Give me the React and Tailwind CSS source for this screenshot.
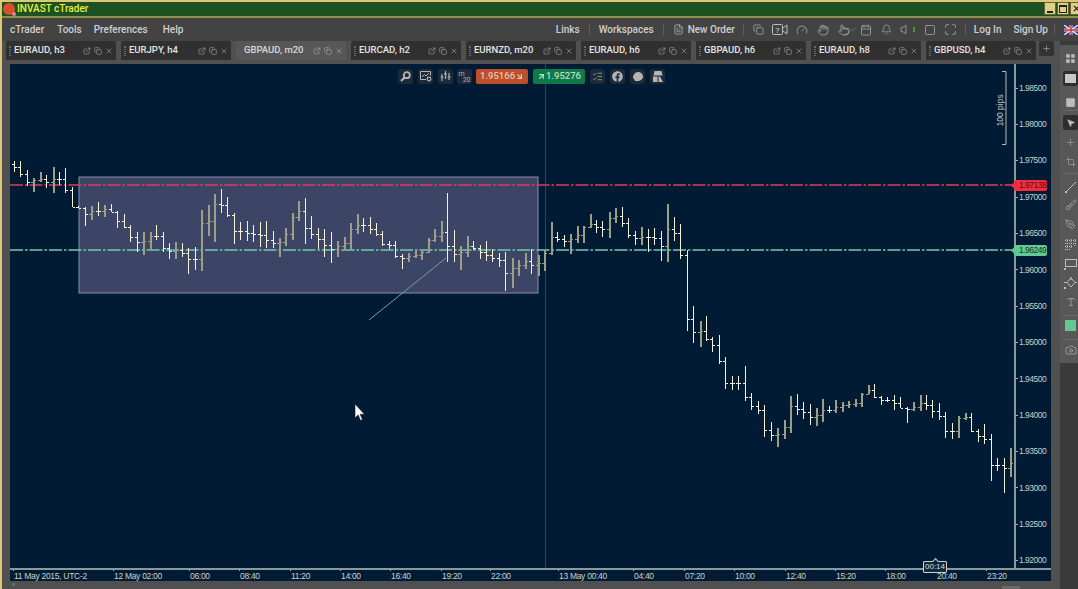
import React from 'react';
import {
  Bell, Calendar, Camera, Check, Copy, Crop, ExternalLink, Gauge, Hand, LayoutGrid, ListChecks,
  Maximize, MousePointer2, PanelTop, PenTool, Plus, Pointer, Square,
  Type, Volume, X, ArrowUpRight, ArrowDownRight, Brush, FileText,
} from 'lucide-react';
import { FaFacebook } from 'react-icons/fa';

const bars = [
  [161,172],[161,177],[170,186],[178,192],[172,182],[175,188],[167,193],[172,185],[168,193],[187,207],
  [206,208],[207,226],[206,220],[202,216],[205,217],[204,212],[211,228],[214,228],[225,242],[232,252],
  [232,255],[232,249],[225,240],[232,252],[243,259],[242,259],[243,257],[248,274],[247,270],[210,271],
  [205,236],[194,242],[189,213],[197,217],[213,244],[222,240],[221,241],[225,242],[222,247],[221,248],
  [231,248],[238,257],[228,246],[213,240],[201,221],[198,244],[216,239],[228,249],[229,257],[232,263],
  [241,257],[237,250],[223,249],[214,234],[218,232],[217,234],[223,236],[231,246],[241,249],[241,258],
  [254,269],[253,262],[250,258],[251,260],[238,253],[229,242],[221,242],[193,262],[230,262],[246,270],
  [236,257],[241,250],[245,259],[241,261],[249,262],[253,267],[252,291],[258,288],[260,276],[253,269],
  [249,274],[255,276],[250,271],[222,255],[232,242],[235,247],[234,254],[226,243],[226,243],[214,228],
  [220,233],[221,237],[212,238],[208,223],[207,227],[218,238],[231,245],[227,245],[229,252],[228,245],
  [231,261],[204,262],[217,241],[224,259],[250,331],[306,343],[321,347],[316,341],[337,352],[335,364],
  [357,389],[376,390],[376,390],[366,401],[393,410],[401,414],[405,437],[422,441],[428,447],[420,439],
  [396,433],[394,415],[402,419],[404,425],[408,426],[399,422],[406,413],[400,413],[402,412],[401,408],
  [399,407],[393,407],[385,394],[384,398],[396,405],[397,402],[395,410],[397,408],[407,423],[402,411],
  [395,411],[395,410],[400,418],[403,420],[412,438],[423,439],[416,438],[413,420],[413,432],[429,442],
  [424,444],[434,481],[458,471],[458,493],[448,477],
];

// close of a bar sits where it overlaps the next one, next bar opens there
const closes = bars.map(([h, l], i) => {
  const next = bars[i + 1] || [h, l];
  const top = Math.max(h, next[0]);
  const bottom = Math.min(l, next[1]);
  return Math.round(top <= bottom ? (top + bottom) / 2 : (h + l) / 2);
});

const prices = ['1.98500','1.98000','1.97500','1.97000','1.96500','1.96000','1.95500','1.95000','1.94500','1.94000','1.93500','1.93000','1.92500','1.92000'];

const times = [
  { w: 'w-[100px]', t: '11 May 2015, UTC-2' },
  { w: 'w-[76px]', t: '12 May 02:00' },
  { w: 'w-[50px]', t: '06:00' },
  { w: 'w-[51px]', t: '08:40' },
  { w: 'w-[50px]', t: '11:20' },
  { w: 'w-[50px]', t: '14:00' },
  { w: 'w-[51px]', t: '16:40' },
  { w: 'w-[49px]', t: '19:20' },
  { w: 'w-[68px]', t: '22:00' },
  { w: 'w-[75px]', t: '13 May 00:40' },
  { w: 'w-[51px]', t: '04:40' },
  { w: 'w-[50px]', t: '07:20' },
  { w: 'w-[51px]', t: '10:00' },
  { w: 'w-[50px]', t: '12:40' },
  { w: 'w-[50px]', t: '15:20' },
  { w: 'w-[51px]', t: '18:00' },
  { w: 'w-[50px]', t: '20:40' },
  { w: 'w-[28px]', t: '23:20' },
];

const tabs = ['EURAUD, h3','EURJPY, h4','GBPAUD, m20','EURCAD, h2','EURNZD, m20','EURAUD, h6','GBPAUD, h6','EURAUD, h8','GBPUSD, h4'];

function Tab({ label, active }) {
  return (
    <div className={`flex h-[19px] w-[110px] items-center rounded-t-[2px] pl-[3px] pr-[3px] ${active ? 'bg-[#575757] text-[#d8d8d8]' : 'bg-[#303030] text-[#e4e4e4]'}`}>
      <span className={`mr-[3px] h-[10px] w-[2px] border-x border-dotted ${active ? 'border-transparent' : 'border-[#666]'}`} />
      <span className="text-[9.5px] font-medium whitespace-nowrap">{label}</span>
      <span className="ml-auto flex items-center gap-[3px] text-[#c4c4c4]">
        <ExternalLink size={8} strokeWidth={1.4} />
        <Copy size={8} strokeWidth={1.4} />
        <X size={8} strokeWidth={1.4} />
      </span>
    </div>
  );
}

function Box({ children }) {
  return <div className="flex h-[15px] w-[15px] items-center justify-center rounded-[3px] bg-[#1c2a3a] text-[#b4b4b4]">{children}</div>;
}

function Chart() {
  return (
    <svg viewBox="10 64 1004 504" className="absolute inset-0 h-full w-full">
      <rect x="79" y="177" width="459" height="116" fill="#3c4565" stroke="#8b8bb5" strokeWidth="1" />
      <line x1="545.5" y1="64" x2="545.5" y2="568" stroke="#2f4353" strokeWidth="1" />
      <line x1="10" y1="185" x2="1014" y2="185" stroke="#dc3f52" strokeWidth="1.6" strokeDasharray="13 2 2.500 2" />
      <line x1="10" y1="250" x2="1014" y2="250" stroke="#72cbab" strokeWidth="1.6" strokeDasharray="13 2 2.500 2" />
      <line x1="369" y1="320" x2="446" y2="258" stroke="#6da59f" strokeWidth="1" />
      {bars.map(([h, l], i) => {
        const x = Math.round(13.7 + 6.47 * i) + 0.5;
        const open = i === 0 ? h + 3 : closes[i - 1];
        const close = closes[i];
        const down = close >= open;
        const c = down ? '#f5f3da' : '#9c9e86';
        return (
          <g key={i} stroke={c} strokeWidth="1" shapeRendering="crispEdges">
            <line x1={x} y1={h} x2={x} y2={l} strokeWidth={down ? 1 : 2} />
            <line x1={x - 2.500} y1={open + 0.5} x2={x} y2={open + 0.5} />
            <line x1={x} y1={close + 0.5} x2={x + 2.500} y2={close + 0.5} />
          </g>
        );
      })}
      <path d="M1002 71.500h4v73h-4" fill="none" stroke="#b4b8b8" strokeWidth="1" />
      <path d="M355 404v14l3.200-3 2.300 5.400 2-.9-2.300-5.200h4.300z" fill="#fff" stroke="#111" strokeWidth="0.6" />
    </svg>
  );
}

export default function App() {
  return (
    <div className="flex h-[589px] w-[1078px] flex-col overflow-hidden border-l-2 border-t-2 border-[#dcc878] bg-[#505050] font-['Roboto','Liberation_Sans',sans-serif]">
      <div className="flex h-[16px] items-start border-b-2 border-[#8d8f4a] bg-[#1e5122]">
        <div className="relative ml-[1px] mt-[1px] h-[12px] w-[12px] rounded-full bg-[#d8502e]">
          <span className="absolute -bottom-[1px] -right-[1px] h-[4px] w-[4px] rounded-full bg-[#f0808a]" />
        </div>
        <span className="ml-[2px] text-[10px] leading-[14px] font-medium text-[#e6f23e]">INVAST cTrader</span>
        <div className="ml-auto mr-[-4px] flex">
          <div className="mr-px flex h-[13px] w-[12px] items-end justify-center border border-[#6a6230] bg-[#dfcf86] pb-[1px]"><span className="h-[2px] w-[6px] bg-[#222]" /></div>
          <div className="mr-px flex h-[13px] w-[12px] items-center justify-center border border-[#6a6230] bg-[#dfcf86]"><span className="h-[8px] w-[8px] border border-t-2 border-[#222]" /></div>
          <div className="flex h-[13px] w-[12px] items-center justify-center border border-[#6a6230] bg-[#dfcf86] text-[#222]"><X size={9} strokeWidth={3} /></div>
        </div>
      </div>

      <div className="flex h-[23px] items-center bg-[#434343] pl-[8px] text-[10px] font-medium text-[#cfcfcf]">
        <span>cTrader</span>
        <span className="ml-[13px]">Tools</span>
        <span className="ml-[12px]">Preferences</span>
        <span className="ml-[15px]">Help</span>
        <span className="ml-auto">Links</span>
        <span className="mx-[9px] h-[11px] w-px bg-[#5e5e5e]" />
        <span>Workspaces</span>
        <span className="mx-[9px] h-[11px] w-px bg-[#5e5e5e]" />
        <FileText size={11} strokeWidth={1.3} />
        <span className="ml-[4px]">New Order</span>
        <span className="ml-[8px] mr-[9px] h-[11px] w-px bg-[#5e5e5e]" />
        <span className="flex items-center text-[#bcbcbc]">
          <Copy size={11} strokeWidth={1.4} />
          <svg width="16" height="11" viewBox="0 0 16 11" fill="none" stroke="currentColor" strokeWidth="1" className="ml-[8px]">
            <rect x="0.5" y="0.5" width="10" height="10" rx="1" />
            <path d="M11 4l4-3v9l-4-3" />
            <text x="5.500" y="8.500" fontSize="8" textAnchor="middle" fill="currentColor" stroke="none">?</text>
          </svg>
          <Gauge size={12} strokeWidth={1.3} className="ml-[8px]" />
          <Hand size={12} strokeWidth={1.3} className="ml-[9px]" />
          <Pointer size={12} strokeWidth={1.3} className="ml-[9px]" />
          <Check size={7} strokeWidth={3} className="text-[#3f9a4c]" />
          <Calendar size={12} strokeWidth={1.3} className="ml-[3px]" />
          <Bell size={11} strokeWidth={1.3} className="ml-[9px]" />
          <Volume size={13} strokeWidth={1.3} className="ml-[8px]" />
          <span className="h-[5px] w-[2px] bg-[#3f9a4c]" />
          <Square size={12} strokeWidth={1.3} className="ml-[9px]" />
          <Maximize size={13} strokeWidth={1.3} className="ml-[8px]" />
        </span>
        <span className="mx-[8px] h-[11px] w-px bg-[#5e5e5e]" />
        <span>Log In</span>
        <span className="ml-[12px]">Sign Up</span>
        <span className="ml-[6px] h-[11px] w-px bg-[#5e5e5e]" />
        <svg width="14" height="10" viewBox="0 0 14 10" className="ml-[9px] shrink-0">
          <rect width="14" height="10" fill="#33337f" />
          <path d="M0 0l14 10M14 0L0 10" stroke="#ddd" strokeWidth="1.500" />
          <path d="M7 0v10M0 5h14" stroke="#ddd" strokeWidth="3" />
          <path d="M7 0v10M0 5h14" stroke="#c23a4a" strokeWidth="1.500" />
        </svg>
      </div>

      <div className="flex min-h-0 flex-1">
        <div className="flex w-[1058px] flex-col">
          <div className="flex gap-[5px] pl-[4px]">
            {tabs.map((t) => <Tab key={t} label={t} active={t === 'GBPAUD, m20'} />)}
            <div className="ml-[-2px] flex h-[15px] w-[15px] items-center justify-center rounded-[2px] bg-[#333] text-[#999]"><Plus size={9} /></div>
          </div>

          <div className="ml-[8px] mt-[4px] flex h-[517px] w-[1041px] flex-col bg-[#001b33]">
            <div className="flex h-[504px]">
              <div className="relative w-[1004px]">
                <Chart />
                <div className="absolute left-[388px] top-[5px] flex items-center">
                  <Box>
                    <svg width="11" height="11" viewBox="0 0 11 11" fill="none" stroke="currentColor">
                      <circle cx="6.800" cy="4.200" r="3" strokeWidth="1.800" />
                      <path d="M4.500 6.500L1 10" strokeWidth="2.200" />
                    </svg>
                  </Box>
                  <div className="ml-[5px]"><Box>
                    <svg width="12" height="11" viewBox="0 0 12 11" fill="none" stroke="currentColor" strokeWidth="1">
                      <path d="M6 8.500H.5v-8h10v4" />
                      <path d="M2 6l2.500-2.500L6 5l3-3" />
                      <circle cx="9" cy="8" r="1.800" strokeWidth="1.200" />
                    </svg>
                  </Box></div>
                  <div className="ml-[5px]"><Box>
                    <svg width="11" height="11" viewBox="0 0 11 11" fill="none" stroke="currentColor" strokeWidth="1.200">
                      <path d="M2 3v7M5.500 0v8M9 2v7" />
                      <path d="M.5 6h3M4 3h3M7.500 6h3" />
                    </svg>
                  </Box></div>
                  <div className="ml-[4px]"><Box>
                    <div className="flex w-[12px] flex-col text-[7px] leading-[6px]">
                      <span>m</span>
                      <span className="self-end">20</span>
                    </div>
                  </Box></div>
                  <div className="ml-[4px] flex h-[15px] w-[52px] items-center justify-between rounded-[2px] bg-[#bd4f2c] px-[4px] text-[9.5px] font-medium text-[#e4c4b4]">
                    1.95166<ArrowDownRight size={9} strokeWidth={3.4} />
                  </div>
                  <div className="ml-[5px] flex h-[15px] w-[52px] items-center justify-between rounded-[2px] bg-[#0e7a48] px-[4px] text-[9.5px] font-medium text-[#bcdcc8]">
                    <ArrowUpRight size={9} strokeWidth={3.4} />1.95276
                  </div>
                  <div className="ml-[5px]"><Box><ListChecks size={11} strokeWidth={1.5} /></Box></div>
                  <div className="ml-[5px]"><Box><FaFacebook size={11} /></Box></div>
                  <div className="ml-[5px]"><Box>
                    <svg width="12" height="11" viewBox="0 0 12 11" fill="currentColor"><path d="M1 7c0-3 2-6 5-6 2.500 0 5 2 5 4.500S8.500 10 5.500 10H3L2.500 8.500z" /></svg>
                  </Box></div>
                  <div className="ml-[5px]"><Box>
                    <svg width="12" height="11" viewBox="0 0 12 11" fill="currentColor"><path d="M2.500 0h7l1 4.500h-9zM1 5.500h4.500V11H1zM6.500 5.500H8L11 11H6.500z" /></svg>
                  </Box></div>
                </div>
                <span className="absolute left-[974px] top-[40px] origin-center -rotate-90 whitespace-nowrap font-['Liberation_Sans',sans-serif] text-[8.5px] text-[#c0c4c4]">100 pips</span>
              </div>

              <div className="relative w-[37px] border-l-2 border-[#8a9a9a] pt-[6px] font-['Liberation_Sans',sans-serif] text-[8.5px] tracking-[-0.5px] text-[#c2d0c8]">
                {prices.map((p) => (
                  <div key={p} className="flex h-[36.35px] items-center">
                    <span className="h-px w-[2px] bg-[#a8b4b4]" />
                    <span className="ml-[1px]">{p}</span>
                  </div>
                ))}
                <div className="absolute left-[-2px] top-[116px] flex h-[11px] w-[33px] items-center rounded-[2px] bg-[#f02d3c] pl-[5px] text-[#5a1018]">
                  <span className="absolute left-[-2px] top-[3px] h-[5px] w-[5px] rotate-45 bg-[#f02d3c]" />
                  <span className="relative">1.97138</span>
                </div>
                <div className="absolute left-[-2px] top-[181px] flex h-[11px] w-[33px] items-center rounded-[2px] bg-[#62c995] pl-[5px] text-[#0e3a2c]">
                  <span className="absolute left-[-2px] top-[3px] h-[5px] w-[5px] rotate-45 bg-[#62c995]" />
                  <span className="relative">1.96249</span>
                </div>
              </div>
            </div>

            <div className="relative flex h-[13px] border-t-2 border-[#8a9a9a] pl-[3px] font-['Liberation_Sans',sans-serif] text-[8.5px] tracking-[-0.3px] text-[#c8d4cc]">
              {times.map((i) => (
                <div key={i.t} className={`${i.w} flex shrink-0 flex-col`}>
                  <span className="h-[1px] w-px bg-[#a8b4b4]" />
                  <span className="ml-[1px] whitespace-nowrap leading-[10px]">{i.t}</span>
                </div>
              ))}
              <div className="absolute left-[913px] top-[-9px] flex h-[12px] w-[24px] items-center justify-center rounded-[1px] border border-[#c8d4cc] bg-[#12283c] text-[8px] tracking-normal text-[#d4dcd8]">
                <span className="absolute left-[9px] top-[-3px] h-[5px] w-[5px] rotate-45 border-l border-t border-[#c8d4cc] bg-[#12283c]" />
                <span className="relative">00:14</span>
              </div>
            </div>
          </div>

          <div className="flex flex-1 items-end justify-between pl-[10px] pr-[40px]">
            <span className="mb-[3px] h-[3px] w-[3px] bg-[#6a6a6a]" />
            <span className="h-[3px] w-[18px] bg-[#6a6a6a]" />
          </div>
        </div>

        <div className="w-[18px] bg-[#3a3a3a] pt-[4px]">
          <div className="flex h-[318px] flex-col items-center bg-[#575757] pl-[3px] text-[#bdbdbd]">
            <LayoutGrid size={11} fill="currentColor" strokeWidth={1} className="mt-[8px]" />
            <div className="mt-[7px] flex h-[15px] w-[15px] items-center justify-center rounded-[2px] bg-[#2e2e2e]"><span className="h-[9px] w-[11px] bg-[#c8c8c8]" /></div>
            <PanelTop size={11} fill="currentColor" strokeWidth={1} className="mt-[11px]" />
            <span className="mt-[2px] h-px w-full bg-[#6a6a6a]" />
            <div className="mt-[4px] flex h-[15px] w-[15px] items-center justify-center rounded-[2px] bg-[#2e2e2e]"><MousePointer2 size={10} fill="currentColor" strokeWidth={1} /></div>
            <Plus size={11} strokeWidth={1} className="mt-[7px]" />
            <Crop size={10} strokeWidth={1.2} className="mt-[9px]" />
            <span className="mt-[6px] h-px w-full bg-[#6a6a6a]" />
            <svg width="12" height="12" viewBox="0 0 12 12" fill="none" stroke="currentColor" className="mt-[7px]">
              <path d="M1.500 10.500L11 1" strokeWidth="1" />
              <rect x="0" y="10" width="2" height="2" fill="currentColor" stroke="none" />
            </svg>
            <Brush size={12} strokeWidth={1.2} className="mt-[6px]" />
            <PenTool size={11} strokeWidth={1.2} className="mt-[8px]" />
            <svg width="12" height="12" viewBox="0 0 12 12" fill="none" stroke="currentColor" strokeWidth="1" strokeDasharray="1 1" className="mt-[9px]">
              <path d="M0 1.500h12M0 4.500h12M0 7.500h8M0 10.500h5M2 0v12M6 0v9M10 0v7" />
            </svg>
            <svg width="13" height="11" viewBox="0 0 13 11" fill="none" stroke="currentColor" strokeWidth="1" className="mt-[8px]">
              <rect x="1.500" y="0.500" width="11" height="7" />
              <rect x="0" y="9" width="2" height="2" fill="currentColor" stroke="none" />
            </svg>
            <svg width="13" height="12" viewBox="0 0 13 12" fill="none" stroke="currentColor" strokeWidth="1" className="mt-[7px]">
              <path d="M7 1L11 5.500 7 10 3 5.500zM7 0v3M0 5.500h3M11 5.500h2" />
              <rect x="0" y="10" width="2" height="2" fill="currentColor" stroke="none" />
            </svg>
            <Type size={10} strokeWidth={1.5} className="mt-[8px]" />
            <span className="mt-[8px] h-px w-full bg-[#6a6a6a]" />
            <span className="mt-[4px] h-[11px] w-[11px] bg-[#60c890]" />
            <span className="mt-[8px] h-px w-full bg-[#6a6a6a]" />
            <Camera size={12} strokeWidth={1.3} className="mt-[4px]" />
          </div>
        </div>
      </div>
    </div>
  );
}
